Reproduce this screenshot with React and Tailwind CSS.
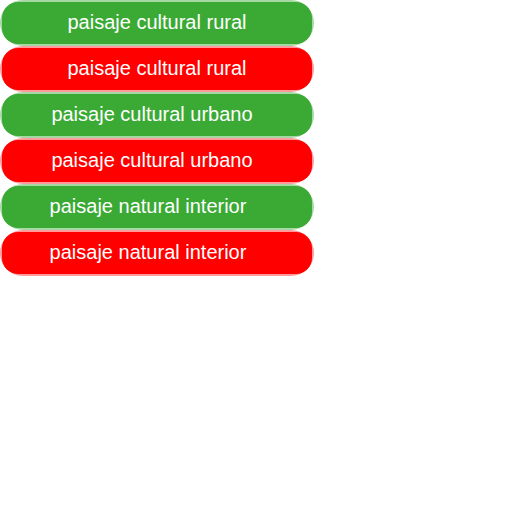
export default function App() {
  const items = [
    { t: "paisaje cultural rural", c: "green", pr: "pr-0" },
    { t: "paisaje cultural rural", c: "red", pr: "pr-0" },
    { t: "paisaje cultural urbano", c: "green", pr: "pr-[10px]" },
    { t: "paisaje cultural urbano", c: "red", pr: "pr-[10px]" },
    { t: "paisaje natural interior", c: "green", pr: "pr-[18px]" },
    { t: "paisaje natural interior", c: "red", pr: "pr-[18px]" },
  ];
  return (
    <div className="w-[314px] flex flex-col" style={{ fontFamily: '"Liberation Sans", Arial, sans-serif' }}>
      {items.map((it, i) => (
        <div
          key={i}
          className={
            it.c === "green"
              ? "h-[46px] rounded-[24px] bg-[#a6d8a4] p-[2px] flex"
              : "h-[46px] rounded-[24px] bg-[#ff9a9a] p-[2px] flex"
          }
        >
          <div
            className={
              it.c === "green"
                ? "flex-1 rounded-[16px] bg-[#3aaa35] flex items-center justify-center text-white text-[20px] leading-none pb-[3px] " + it.pr
                : "flex-1 rounded-[16px] bg-[#ff0000] flex items-center justify-center text-white text-[20px] leading-none pb-[3px] " + it.pr
            }
          >
            {it.t}
          </div>
        </div>
      ))}
    </div>
  );
}
